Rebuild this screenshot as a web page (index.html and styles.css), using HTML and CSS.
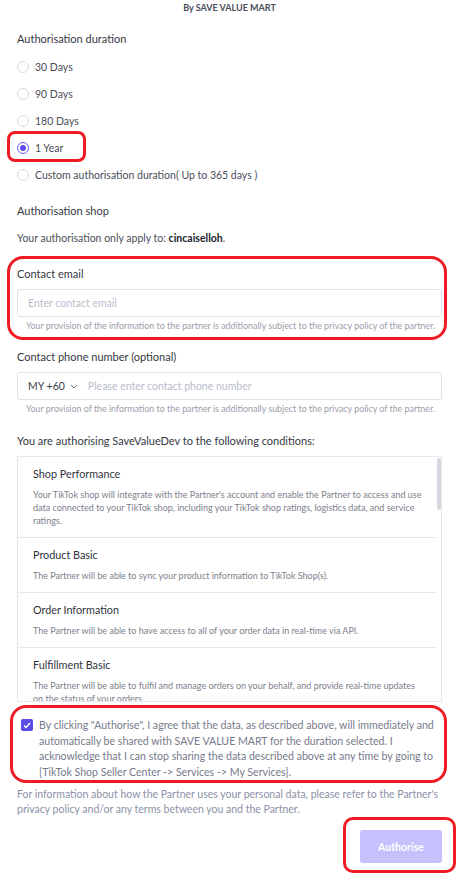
FILE: index.html
```html
<!DOCTYPE html>
<html lang="en">
<head>
    <meta charset="UTF-8">
    <meta name="viewport" content="width=device-width, initial-scale=1.0">
    <title>Authorise Partner</title>
    <link rel="stylesheet" href="styles.css">
</head>
<body>
    <div class="page">
        <div class="by-line">By SAVE VALUE MART</div>

        <div class="label label-first">Authorisation duration</div>
        <div class="radios">
            <div class="radio-row"><span class="radio"></span>30 Days</div>
            <div class="radio-row"><span class="radio"></span>90 Days</div>
            <div class="radio-row"><span class="radio"></span>180 Days</div>
            <div class="radio-row"><span class="radio checked"></span>1 Year</div>
            <div class="radio-row"><span class="radio"></span>Custom authorisation duration( Up to 365 days )</div>
        </div>

        <div class="label label-shop">Authorisation shop</div>
        <div class="shop-line">Your authorisation only apply to: <b>cincaiselloh</b>.</div>

        <div class="label label-email">Contact email</div>
        <div class="field"><span class="placeholder">Enter contact email</span></div>
        <div class="note">Your provision of the information to the partner is additionally subject to the privacy policy of the partner.</div>

        <div class="label label-phone">Contact phone number (optional)</div>
        <div class="field">
            <span class="country">MY +60</span>
            <svg class="chevron" width="8" height="5" viewBox="0 0 8 5"><path d="M1 1l3 3 3-3" fill="none" stroke="#7a7e8c" stroke-width="1"/></svg>
            <span class="placeholder">Please enter contact phone number</span>
        </div>
        <div class="note">Your provision of the information to the partner is additionally subject to the privacy policy of the partner.</div>

        <div class="label label-cond">You are authorising SaveValueDev to the following conditions:</div>
        <div class="conditions">
            <div class="cond">
                <div class="cond-title">Shop Performance</div>
                <div class="cond-desc">Your TikTok shop will integrate with the Partner's account and enable the Partner to access and use data connected to your TikTok shop, including your TikTok shop ratings, logistics data, and service ratings.</div>
            </div>
            <div class="cond">
                <div class="cond-title">Product Basic</div>
                <div class="cond-desc">The Partner will be able to sync your product information to TikTok Shop(s).</div>
            </div>
            <div class="cond">
                <div class="cond-title">Order Information</div>
                <div class="cond-desc">The Partner will be able to have access to all of your order data in real-time via API.</div>
            </div>
            <div class="cond">
                <div class="cond-title">Fulfillment Basic</div>
                <div class="cond-desc">The Partner will be able to fulfil and manage orders on your behalf, and provide real-time updates on the status of your orders.</div>
            </div>
            <div class="scroll-thumb"></div>
        </div>

        <div class="consent">
            <span class="checkbox">
                <svg width="8" height="7" viewBox="0 0 8 7"><path d="M1 3.5l2 2 4-4.5" fill="none" stroke="#fff" stroke-width="1.4"/></svg>
            </span>
            <div class="consent-text">By clicking "Authorise", I agree that the data, as described above, will immediately and automatically be shared with SAVE VALUE MART for the duration selected. I acknowledge that I can stop sharing the data described above at any time by going to [TikTok Shop Seller Center -&gt; Services -&gt; My Services].</div>
        </div>
        <div class="info">For information about how the Partner uses your personal data, please refer to the Partner's privacy policy and/or any terms between you and the Partner.</div>

        <div class="actions">
            <button class="btn-authorise">Authorise</button>
        </div>

        <!-- red highlight marks -->
        <div class="mark mark-year"></div>
        <div class="mark mark-email"></div>
        <div class="mark mark-consent"></div>
        <div class="mark mark-button"></div>
    </div>
</body>
</html>
```

FILE: styles.css
```css
body {
    margin: 0;
    background: #fff;
    font-family: Lato, "Open Sans", sans-serif;
    color: #3a3e49;
    overflow: hidden;
}
.page {
    position: relative;
    width: 457px;
    height: 875px;
    box-sizing: border-box;
    padding: 0 15px 0 17px;
}
.by-line {
    height: 15px;
    line-height: 15px;
    text-align: center;
    font-size: 9px;
    font-weight: bold;
    color: #4a4e5a;
}
.label {
    font-size: 11px;
    line-height: 16px;
    color: #343843;
}
.label-first { margin-top: 16px; }
.label-shop { margin-top: 15px; }
.label-email { margin-top: 20px; }
.label-phone { margin-top: 17px; }
.label-cond { margin-top: 18px; }
.radios {
    margin-top: 6px;
}
.radio-row {
    display: flex;
    align-items: center;
    height: 27px;
    font-size: 10.5px;
    color: #4a4e59;
}
.radio {
    width: 12px;
    height: 12px;
    box-sizing: border-box;
    border: 1px solid #d8dae3;
    border-radius: 50%;
    margin-right: 6px;
    display: flex;
    align-items: center;
    justify-content: center;
}
.radio.checked {
    border-color: #6457f0;
}
.radio.checked::after {
    content: "";
    width: 6px;
    height: 6px;
    border-radius: 50%;
    background: #5a4de6;
}
.shop-line {
    margin-top: 11px;
    font-size: 10.5px;
    line-height: 16px;
    color: #4a4e59;
}
.shop-line b {
    color: #22252d;
}
.field {
    margin-top: 7px;
    height: 28px;
    box-sizing: border-box;
    border: 1px solid #e0e2ea;
    border-radius: 3px;
    display: flex;
    align-items: center;
    padding: 0 10px;
    font-size: 10.5px;
}
.placeholder {
    color: #b9bccb;
}
.country {
    color: #3a3e49;
}
.chevron {
    margin: 1px 10px 0 5px;
}
.note {
    margin-top: 3px;
    padding-left: 9px;
    font-size: 8.9px;
    line-height: 12px;
    color: #9a9dab;
    white-space: nowrap;
}
.conditions {
    position: relative;
    margin-top: 7px;
    height: 246px;
    box-sizing: border-box;
    border: 1px solid #e6e7ec;
    overflow: hidden;
}
.cond {
    margin-right: 5px;
    padding: 9px 10px 10px 15px;
    border-bottom: 1px solid #e6e7ec;
}
.cond-title {
    font-size: 10.8px;
    line-height: 16px;
    color: #2f333d;
}
.cond-desc {
    margin-top: 6px;
    font-size: 9px;
    line-height: 13px;
    color: #7d808c;
}
.scroll-thumb {
    position: absolute;
    top: 1px;
    right: 0;
    width: 4px;
    height: 52px;
    border-radius: 2px;
    background: #d6d7df;
}
.consent {
    display: flex;
    align-items: flex-start;
    margin-top: 16px;
    padding-left: 4px;
}
.checkbox {
    flex: none;
    width: 12px;
    height: 12px;
    margin-top: 1px;
    margin-right: 6px;
    border-radius: 2px;
    background: #5a4de6;
    display: flex;
    align-items: center;
    justify-content: center;
}
.consent-text {
    font-size: 10.6px;
    line-height: 15.6px;
    color: #767a8c;
}
.info {
    margin-top: 7px;
    font-size: 10.5px;
    line-height: 15px;
    color: #8c91a8;
}
.actions {
    display: flex;
    justify-content: flex-end;
    margin-top: 13px;
}
.btn-authorise {
    width: 82px;
    height: 33px;
    border: none;
    border-radius: 3px;
    background: #c4c1fc;
    color: #fff;
    font-family: Lato, sans-serif;
    font-size: 10.5px;
    font-weight: bold;
}
.mark {
    position: absolute;
    box-sizing: border-box;
    border: 3px solid #ed1c24;
}
.mark-year {
    left: 7px;
    top: 131px;
    width: 79px;
    height: 31px;
    border-radius: 8px;
}
.mark-email {
    left: 7px;
    top: 256px;
    width: 440px;
    height: 84px;
    border-radius: 16px;
}
.mark-consent {
    left: 10px;
    top: 705px;
    width: 437px;
    height: 78px;
    border-radius: 16px;
}
.mark-button {
    left: 343px;
    top: 817px;
    width: 113px;
    height: 56px;
    border-radius: 10px;
}
```
